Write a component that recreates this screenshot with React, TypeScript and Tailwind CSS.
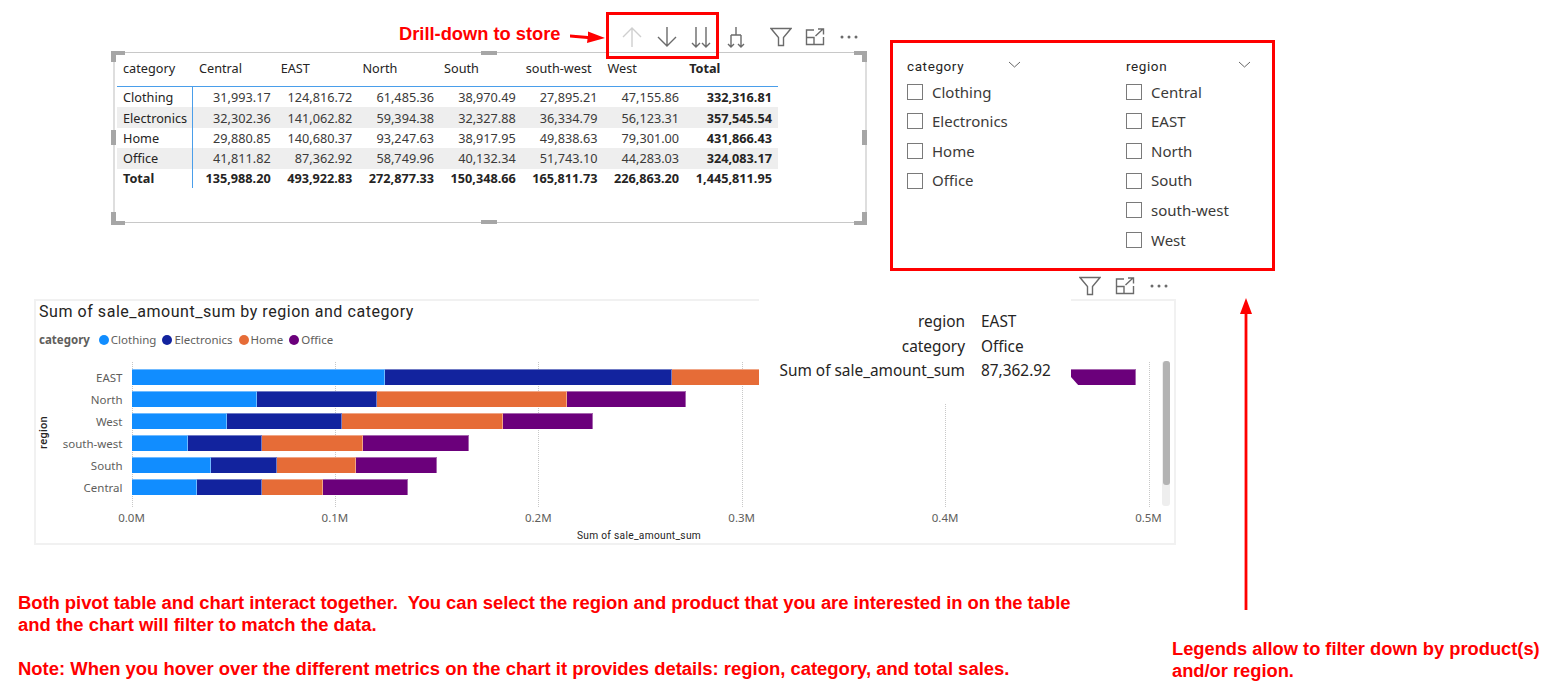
const sans = '"Noto Sans", "Open Sans", sans-serif';

const regions = ['Central', 'EAST', 'North', 'South', 'south-west', 'West'];

const tableRows = [
  { name: 'Clothing', values: ['31,993.17', '124,816.72', '61,485.36', '38,970.49', '27,895.21', '47,155.86'], total: '332,316.81' },
  { name: 'Electronics', values: ['32,302.36', '141,062.82', '59,394.38', '32,327.88', '36,334.79', '56,123.31'], total: '357,545.54' },
  { name: 'Home', values: ['29,880.85', '140,680.37', '93,247.63', '38,917.95', '49,838.63', '79,301.00'], total: '431,866.43' },
  { name: 'Office', values: ['41,811.82', '87,362.92', '58,749.96', '40,132.34', '51,743.10', '44,283.03'], total: '324,083.17' },
];

const grandTotals = ['135,988.20', '493,922.83', '272,877.33', '150,348.66', '165,811.73', '226,863.20'];

// clothing, electronics, home, office
const bars = [
  { region: 'EAST', values: [124816.72, 141062.82, 140680.37, 87362.92] },
  { region: 'North', values: [61485.36, 59394.38, 93247.63, 58749.96] },
  { region: 'West', values: [47155.86, 56123.31, 79301.0, 44283.03] },
  { region: 'south-west', values: [27895.21, 36334.79, 49838.63, 51743.1] },
  { region: 'South', values: [38970.49, 32327.88, 38917.95, 40132.34] },
  { region: 'Central', values: [31993.17, 32302.36, 29880.85, 41811.82] },
];

const segmentColors = ['bg-[#118DFF]', 'bg-[#12239E]', 'bg-[#E66C37]', 'bg-[#6B007B]'];
const legend = [
  { name: 'Clothing', color: 'bg-[#118DFF]' },
  { name: 'Electronics', color: 'bg-[#12239E]' },
  { name: 'Home', color: 'bg-[#E66C37]' },
  { name: 'Office', color: 'bg-[#6B007B]' },
];
const PX_PER_UNIT = 203.4 / 100000;

function FunnelIcon() {
  return (
    <svg width="22" height="20" viewBox="0 0 22 20" fill="none" stroke="#6b6b6b" strokeWidth="1.4">
      <path d="M1 1.5H21L13.5 10.5V18.5H8.5V10.5Z" />
    </svg>
  );
}

function ExpandIcon() {
  return (
    <svg width="20" height="18" viewBox="0 0 20 18" fill="none" stroke="#6b6b6b" strokeWidth="1.4">
      <path d="M9 2H1.5V16.5H18.5V9" />
      <path d="M1.5 9.5H9V16.5" />
      <path d="M10.5 8L18 1M13 1H18.5V6.5" />
    </svg>
  );
}

function DotsIcon() {
  return (
    <svg width="20" height="6" viewBox="0 0 20 6" fill="#6b6b6b">
      <circle cx="3" cy="3" r="1.5" />
      <circle cx="10" cy="3" r="1.5" />
      <circle cx="17" cy="3" r="1.5" />
    </svg>
  );
}

function ArrowUpIcon() {
  return (
    <svg width="20" height="20" viewBox="0 0 20 20" fill="none" stroke="#cfcfcf" strokeWidth="1.4">
      <path d="M10 1V20M1 10L10 1L19 10" />
    </svg>
  );
}

function ArrowDownIcon() {
  return (
    <svg width="20" height="20" viewBox="0 0 20 20" fill="none" stroke="#6b6b6b" strokeWidth="1.4">
      <path d="M10 0V19M1 10L10 19L19 10" />
    </svg>
  );
}

function DoubleDownIcon() {
  return (
    <svg width="20" height="21" viewBox="0 0 20 21" fill="none" stroke="#6b6b6b" strokeWidth="1.4">
      <path d="M5 0V20M1 16L5 20L9 16" />
      <path d="M15 0V20M11 16L15 20L19 16" />
    </svg>
  );
}

function HierarchyIcon() {
  return (
    <svg width="18" height="21" viewBox="0 0 18 21" fill="none" stroke="#6b6b6b" strokeWidth="1.4">
      <path d="M9 0V8M4 8H14" />
      <path d="M4 8V20M1 17L4 20L7 17" />
      <path d="M14 8V20M11 17L14 20L17 17" />
    </svg>
  );
}

function Chevron() {
  return (
    <svg width="13" height="7" viewBox="0 0 13 7" fill="none" stroke="#666" strokeWidth="1">
      <path d="M1 1L6.5 6L12 1" />
    </svg>
  );
}

function Handle({ className }: { className: string }) {
  return <div className={`absolute bg-[#a6a6a6] ${className}`} />;
}

function PivotTable() {
  return (
    <div className="relative ml-[113px] mt-[52px] h-[171px] w-[754px] shrink-0 border-y border-y-[#c8c8c8] border-x-2 border-x-[#dedede] pl-[2px] text-[12.7px] text-[#252423]">
      <div className="grid h-[34px] w-[661px] grid-cols-[76px_repeat(6,81.7px)_93.8px] items-center border-b border-[#4a9eea] pb-[2px]">
        <div className="pl-[6px]">category</div>
        {regions.map((region) => (
          <div key={region} className="pl-[6px]">
            {region}
          </div>
        ))}
        <div className="pl-[6px] font-bold">Total</div>
      </div>

      {tableRows.map((row, i) => (
        <div
          key={row.name}
          className={`grid h-[20.4px] w-[661px] grid-cols-[76px_repeat(6,81.7px)_93.8px] ${i % 2 === 1 ? 'bg-[#eeeeee]' : ''}`}
        >
          <div className="flex items-center border-r border-[#4a9eea] pl-[6px] pt-[1px]">{row.name}</div>
          {row.values.map((value) => (
            <div key={value} className="flex items-center justify-end pr-[4px] pt-[1px] text-[#3b3a39]">
              {value}
            </div>
          ))}
          <div className="flex items-center justify-end pr-[5px] pt-[1px] font-bold">{row.total}</div>
        </div>
      ))}
      <div className="grid h-[19.8px] w-[661px] grid-cols-[76px_repeat(6,81.7px)_93.8px] font-bold">
        <div className="flex items-center border-r border-[#4a9eea] pl-[6px]">Total</div>
        {grandTotals.map((value) => (
          <div key={value} className="flex items-center justify-end pr-[4px]">
            {value}
          </div>
        ))}
        <div className="flex items-center justify-end pr-[5px]">1,445,811.95</div>
      </div>

      {/* visual header */}
      <div className="absolute left-[499px] top-[-28px] flex h-[24px] items-center">
        <div className="flex w-[35px] justify-center"><ArrowUpIcon /></div>
        <div className="flex w-[35px] justify-center"><ArrowDownIcon /></div>
        <div className="flex w-[34px] justify-center"><DoubleDownIcon /></div>
        <div className="flex w-[35px] justify-center"><HierarchyIcon /></div>
        <div className="ml-[10px] flex w-[35px] justify-center"><FunnelIcon /></div>
        <div className="flex w-[34px] justify-center"><ExpandIcon /></div>
        <div className="flex w-[34px] justify-center"><DotsIcon /></div>
      </div>

      {/* selection handles */}
      <Handle className="left-[-4px] top-[-2px] h-[4px] w-[14px]" />
      <Handle className="left-[-4px] top-[-2px] h-[11px] w-[5px]" />
      <Handle className="bottom-[-3px] left-[-4px] h-[4px] w-[14px]" />
      <Handle className="bottom-[-3px] left-[-4px] h-[13px] w-[5px]" />
      <Handle className="right-[-2px] top-[-2px] h-[4px] w-[13px]" />
      <Handle className="right-[-2px] top-[-2px] h-[11px] w-[5px]" />
      <Handle className="bottom-[-3px] right-[-2px] h-[4px] w-[13px]" />
      <Handle className="bottom-[-3px] right-[-2px] h-[13px] w-[5px]" />
      <Handle className="left-[366px] top-[-2px] h-[4px] w-[16px]" />
      <Handle className="bottom-[-2px] left-[366px] h-[4px] w-[16px]" />
      <Handle className="left-[-4px] top-[77px] h-[15px] w-[5px]" />
      <Handle className="right-[-2px] top-[77px] h-[15px] w-[5px]" />
    </div>
  );
}

function SlicerColumn({
  title,
  items,
  className,
  headerClassName,
}: {
  title: string;
  items: string[];
  className: string;
  headerClassName: string;
}) {
  return (
    <div className={className}>
      <div className={`flex h-[21px] items-center justify-between ${headerClassName}`}>
        <span className="font-['Roboto',sans-serif] text-[13.5px] tracking-[0.6px] text-[#252423]">{title}</span>
        <span className="mb-[4px]"><Chevron /></span>
      </div>
      {items.map((item) => (
        <div key={item} className="flex h-[29.6px] items-center">
          <div className="h-[16px] w-[16px] border border-[#7a7a7a]" />
          <span className="ml-[9px] text-[15px] text-[#3b3a39]">{item}</span>
        </div>
      ))}
    </div>
  );
}

function Slicers() {
  return (
    <div className="ml-[23px] mt-[40px] flex h-[231px] w-[385px] shrink-0 border-[3px] border-[#ff0000] pl-[14px] pt-[13px]">
      <SlicerColumn
        className="w-[219px]"
        headerClassName="w-[114px]"
        title="category"
        items={['Clothing', 'Electronics', 'Home', 'Office']}
      />
      <SlicerColumn className="w-[125px]" headerClassName="w-[125px]" title="region" items={regions} />
    </div>
  );
}

function Chart() {
  return (
    <div className="relative ml-[34px] h-[246px] w-[1142px] border-2 border-[#f1f1f1]">
      <div className="flex h-[22px] items-center pl-[3px] font-['Roboto',sans-serif] text-[16px] tracking-[0.55px] text-[#252423]">
        Sum of sale_amount_sum by region and category
      </div>
      <div className="flex h-[30px] items-center pl-[3px] pt-[4px] text-[11.5px] text-[#605e5c]">
        <span className="mr-[9px] font-bold">category</span>
        {legend.map((item) => (
          <span key={item.name} className="mr-[6px] flex items-center gap-[2px]">
            <span className={`h-[10px] w-[10px] rounded-full ${item.color}`} />
            {item.name}
          </span>
        ))}
      </div>

      <div className="relative flex h-[143px] pt-[16px]">
        {/* gridlines */}
        {[95.5, 299, 502.4, 705.8, 909.2, 1112.6].map((left) => (
          <div key={left} className="absolute top-[9px] h-[145px] border-l border-dotted border-[#c8c8c8]" style={{ left }} />
        ))}

        <div className="flex w-[12px] shrink-0 items-center justify-center pl-[5px]">
          <span className="rotate-180 font-['Roboto',sans-serif] text-[11px] font-medium tracking-[0.3px] text-[#252423] [writing-mode:vertical-rl]">
            region
          </span>
        </div>

        <div className="relative flex flex-col gap-[5.6px]">
          {bars.map((bar) => (
            <div key={bar.region} className="flex h-[16.4px] items-center">
              <div className="w-[83.5px] shrink-0 pr-[9px] text-right text-[11.5px] text-[#605e5c]">{bar.region}</div>
              <div className="flex h-full">
                {bar.values.map((value, i) => (
                  <div
                    key={i}
                    className={`h-full border-r border-t border-white/40 ${segmentColors[i]}`}
                    style={{ width: value * PX_PER_UNIT }}
                  />
                ))}
              </div>
            </div>
          ))}
        </div>

        {/* scrollbar */}
        <div className="absolute left-[1126px] top-[8px] h-[145px] w-[8px] rounded-[3px] bg-[#eeeeee]">
          <div className="ml-[1px] h-[124px] w-[7px] rounded-[3px] bg-[#b3b3b3]" />
        </div>
      </div>

      <div className="ml-[-6.2px] mt-[13px] grid w-fit grid-cols-[repeat(6,203.4px)] text-center text-[11.5px] text-[#605e5c]">
        {['0.0M', '0.1M', '0.2M', '0.3M', '0.4M', '0.5M'].map((tick) => (
          <div key={tick} className="h-[17px] leading-[17px]">
            {tick}
          </div>
        ))}
      </div>
      <div className="mt-[4px] w-[1206px] text-center font-['Roboto',sans-serif] text-[10.2px] leading-[12px] tracking-[0.3px] text-[#252423]">
        Sum of sale_amount_sum
      </div>

      {/* hover tooltip */}
      <div className="absolute left-[723px] top-[-4px] h-[106px] w-[312px] bg-white pt-[13px] text-[15.4px] leading-[24.5px] text-[#252423]">
        <div className="grid grid-cols-[206px_1fr]">
          <div className="text-right">region</div>
          <div className="pl-[16px]">EAST</div>
          <div className="text-right">category</div>
          <div className="pl-[16px]">Office</div>
          <div className="text-right">Sum of sale_amount_sum</div>
          <div className="pl-[16px]">87,362.92</div>
        </div>
        <div className="absolute left-full top-[80px] h-[9px] w-[8px] bg-white [clip-path:polygon(0_0,100%_100%,0_100%)]" />
      </div>
    </div>
  );
}

export default function App() {
  return (
    <div className="relative h-[696px] w-[1557px] overflow-hidden bg-white" style={{ fontFamily: sans }}>
      <div className="flex h-[272px] items-start">
        <PivotTable />
        <Slicers />
      </div>

      <div className="flex h-[27px] w-[1176px] items-center justify-end gap-[14px] pr-[7px]">
        <FunnelIcon />
        <ExpandIcon />
        <DotsIcon />
      </div>

      <Chart />

      <div className="mt-[47px] flex font-['Liberation_Sans',Arial,sans-serif] font-bold leading-[22px] text-[#ff0000]">
        <div className="w-[1172px] pl-[18px] text-[18.45px]">
          <span className="tracking-[-0.05px]">
            Both pivot table and chart interact together.&nbsp; You can select the region and product that you are interested in on the table
          </span>
          <br />
          and the chart will filter to match the data.
          <br />
          <br />
          Note: When you hover over the different metrics on the chart it provides details: region, category, and total sales.
        </div>
        <div className="pt-[46px] text-[18.3px]">
          Legends allow to filter down by product(s)
          <br />
          and/or region.
        </div>
      </div>

      {/* annotations on top of the screenshot */}
      <div className="absolute left-[399px] top-[23px] font-['Liberation_Sans',Arial,sans-serif] text-[18.3px] font-bold leading-[22px] text-[#ff0000]">
        Drill-down to store
      </div>
      <div className="absolute left-[606px] top-[12px] h-[47px] w-[113px] border-[3px] border-[#ff0000]" />
      <svg className="absolute left-[568px] top-[30px]" width="38" height="14" viewBox="0 0 38 14" fill="#ff0000">
        <path d="M2 4.5L20 6L20 1.5L37 8L19 13L19.5 9L2 7.5Z" />
      </svg>
      <svg className="absolute left-[1238px] top-[297px]" width="16" height="314" viewBox="0 0 16 314" fill="#ff0000">
        <path d="M8 1L14 17H9.4V313H6.6V17H2Z" />
      </svg>
    </div>
  );
}
